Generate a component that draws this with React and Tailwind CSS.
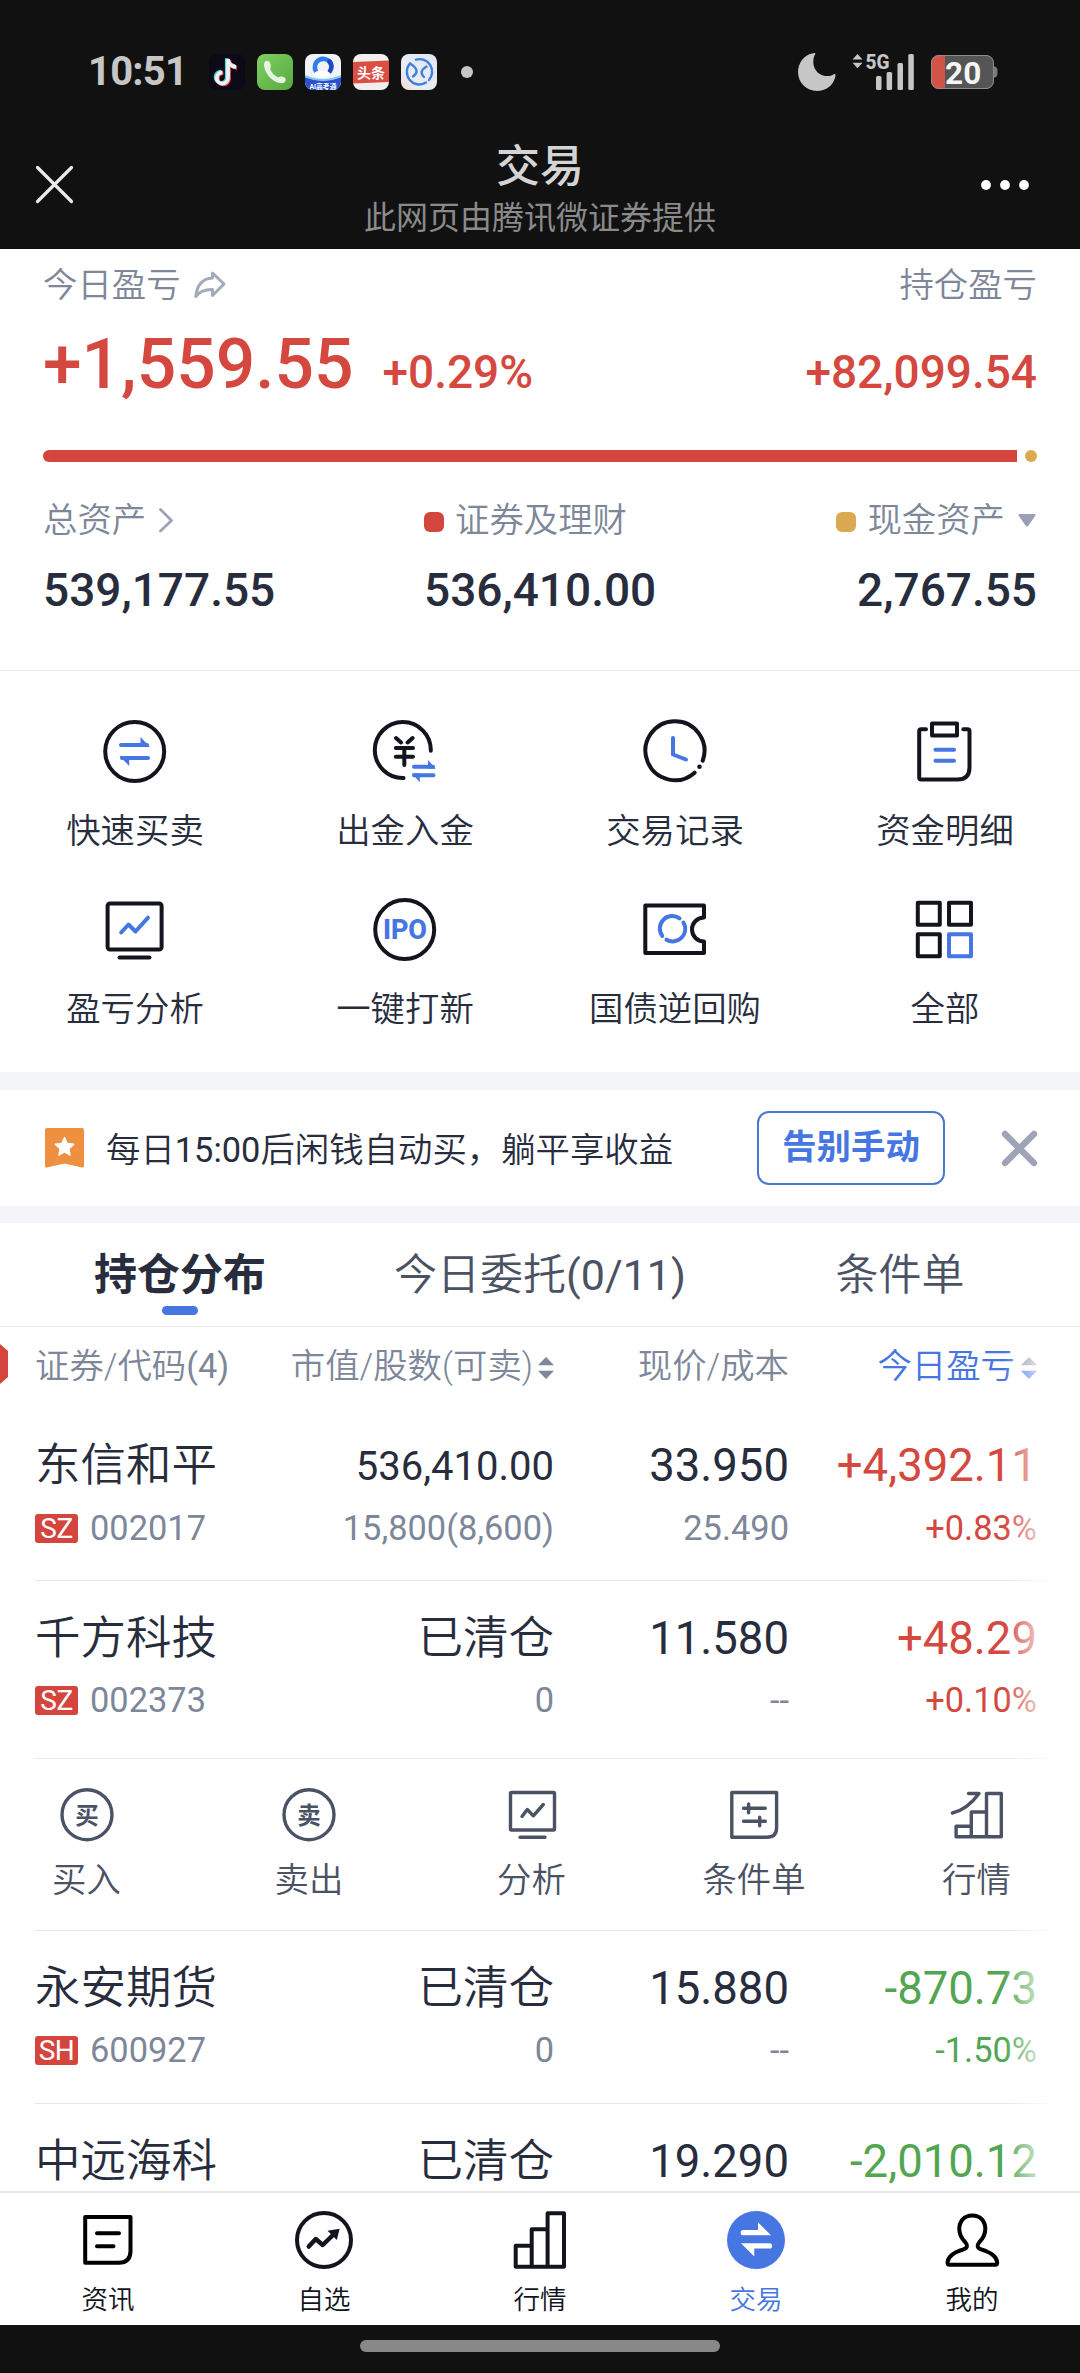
import React from "react";

const INK = "#12151d";
const BLUE = "#4576e2";
const SLATE = "#4a5264";

function Svg({ w, h, children, className = "", stroke = INK, sw = 4 }) {
  return (
    <svg
      width={w}
      height={h}
      viewBox={`0 0 ${w} ${h}`}
      fill="none"
      stroke={stroke}
      strokeWidth={sw}
      strokeLinecap="round"
      strokeLinejoin="round"
      className={`block shrink-0 overflow-visible ${className}`}
    >
      {children}
    </svg>
  );
}

/* ---------- status bar ---------- */

function AppIcons() {
  return (
    <div className="flex gap-3">
      <Svg w={36} h={36} stroke="none">
        <rect width="36" height="36" rx="8" fill="#0b0a16" />
        <g fill="none" strokeWidth="3.8" strokeLinecap="butt">
          <path d="M18.6 4.6V24a5.6 5.6 0 1 1-5.6-6M18.6 5c.6 4.2 3.4 7 8 7.6" stroke="#4fd8da" transform="translate(-.8 -.4)" />
          <path d="M18.6 4.6V24a5.6 5.6 0 1 1-5.6-6M18.6 5c.6 4.2 3.4 7 8 7.6" stroke="#e2455c" transform="translate(1.4 1.2)" />
          <path d="M18.6 4.6V24a5.6 5.6 0 1 1-5.6-6M18.6 5c.6 4.2 3.4 7 8 7.6" stroke="#f0f0f0" transform="translate(.4 .4)" />
        </g>
      </Svg>
      <Svg w={36} h={36} stroke="none">
        <defs>
          <linearGradient id="call" x1="0" y1="0" x2="1" y2="1">
            <stop offset="0" stopColor="#7fd162" />
            <stop offset="1" stopColor="#58a83e" />
          </linearGradient>
        </defs>
        <rect width="36" height="36" rx="8" fill="url(#call)" />
        <path d="M8.5 7.3c1.7-1 4-.2 4.6 1.6.7 2 .9 3.2.5 4.6-.4 1.300-.5 2 .3 3.300 1.500 2.600 3.600 4.500 6 5.900 1.200.7 1.900.5 3 .1 1.400-.5 3.400-.1 4.800.8 1.500 1 1.400 3.900-.4 4.900-2.200 1.200-5.700.8-8.900-1C12.600 24.400 8.700 19.300 7.300 13.300c-.6-2.600-.4-5.100 1.200-6Z" fill="#e6f3e0" />
      </Svg>
      <Svg w={36} h={36} stroke="none">
        <defs>
          <clipPath id="qb"><rect width="36" height="36" rx="8" /></clipPath>
        </defs>
        <g clipPath="url(#qb)">
          <rect width="36" height="36" fill="#f1f3f6" />
          <path d="M0 23q18 7 36 0v13H0Z" fill="#2a51d0" />
          <path d="M0 21q18 8 36 0v2.500q-18 7-36 0Z" fill="#7fc6f2" />
          <path d="M11 17.500a8.300 8.300 0 1 1 14.500-8.500" stroke="#2f7de8" strokeWidth="4.600" />
          <path d="M24.500 7.500a8.300 8.300 0 0 1 .5 9.600" stroke="#2244c8" strokeWidth="4.600" />
          <ellipse cx="17" cy="20" rx="8" ry="3.400" fill="#fff" />
          <text x="18" y="34.500" fontSize="6.800" fontWeight="700" fill="#fff" textAnchor="middle">AI高考通</text>
        </g>
      </Svg>
      <Svg w={36} h={36} stroke="none">
        <rect width="36" height="36" rx="8" fill="#f1f0ef" />
        <path d="M0 8 36 6.500V28L0 29.500Z" fill="#dc4d42" />
        <text x="18" y="23.500" fontSize="14" fontWeight="700" fill="#fff" textAnchor="middle">头条</text>
      </Svg>
      <Svg w={36} h={36} stroke="none">
        <defs>
          <linearGradient id="cc" x1="1" y1="0" x2="0" y2="1">
            <stop offset="0" stopColor="#dfe6f1" />
            <stop offset=".7" stopColor="#eaecf2" />
            <stop offset="1" stopColor="#f3dcc9" />
          </linearGradient>
        </defs>
        <rect width="36" height="36" rx="8" fill="url(#cc)" />
        <g stroke="#4380de" strokeWidth="2.400">
          <path d="M15 5.600A12.600 12.600 0 0 1 28 26M25 28.600A12.600 12.600 0 0 1 9 9.500" />
          <path d="M9 9.500c7 4.500 9 8.500 3 13M25.500 12.500c-6 3.500-6 7-2.500 10.500" />
        </g>
      </Svg>
    </div>
  );
}

function StatusBar() {
  return (
    <div className="flex h-36 items-center pl-[88px] pr-[82px]">
      <span className="w-[121px] text-[40px] font-bold leading-[36px] tracking-[-0.8px] text-[#c6c6c6]">10:51</span>
      <AppIcons />
      <span className="ml-6 h-3 w-3 rounded-full bg-[#c6c6c6]" />
      <div className="ml-auto flex items-center">
        <Svg w={38} h={38} stroke="none">
          <path d="M17.500 0.500C12 10 17 24 31 23c2.500-.2 4-1.200 5.300-2C38 20.500 37.500 23 37 25 34.500 33 27.500 38 19 38 8.500 38 0 29.500 0 19 0 9.500 6.500 2 14 .4c1.500-.3 3.800-1 3.500.1Z" fill="#c6c6c6" />
        </Svg>
        <Svg w={62} h={36} stroke="none" className="ml-[16px]">
          <path d="M5.500 0 10.500 5.500H.5ZM5.500 14.300.500 8.800h10Z" fill="#c6c6c6" />
          <text x="13.500" y="14.600" fontSize="20.500" fontWeight="800" fill="#c6c6c6" textLength="24" lengthAdjust="spacingAndGlyphs">5G</text>
          <g fill="#c6c6c6">
            <rect x="24" y="22" width="5.500" height="14" rx="1.500" />
            <rect x="34.600" y="18" width="5.500" height="18" rx="1.500" />
            <rect x="45.500" y="9" width="5.500" height="27" rx="1.500" />
            <rect x="56.300" y="0" width="5.500" height="36" rx="1.500" />
          </g>
        </Svg>
        <Svg w={67} h={34} stroke="none" className="ml-[17px]">
          <defs>
            <clipPath id="bat"><rect width="63" height="34" rx="8" /></clipPath>
          </defs>
          <path d="M62 11c4 1 4.500 2 4.500 6s-.5 5-4.500 6Z" fill="#7a7a7a" />
          <g clipPath="url(#bat)">
            <rect width="63" height="34" fill="#555" />
            <rect width="14" height="34" fill="#d25446" />
          </g>
          <rect x=".5" y=".5" width="62" height="33" rx="7.500" stroke="#8d8d8d" strokeWidth="1" />
          <text x="32.200" y="28.500" fontSize="31.500" fontWeight="700" fill="#f5f5f5" textAnchor="middle">20</text>
        </Svg>
      </div>
    </div>
  );
}

function TitleBar() {
  return (
    <div className="flex h-[105px] items-start justify-between pl-[36px] pr-[50px]">
      <Svg w={38} h={38} stroke="#ebebeb" sw={3.2} className="mt-[22px]">
        <path d="M1.500 1.500 35.500 35.500M35.500 1.500 1.500 35.500" />
      </Svg>
      <div className="ml-[26px] flex flex-col items-center">
        <h1 className="h-[48px] text-[44px] font-medium leading-[46px] text-[#d4d4d4]">交易</h1>
        <p className="text-[32px] leading-[52px] text-[#8a8a8a]">此网页由腾讯微证券提供</p>
      </div>
      <Svg w={50} h={10} stroke="none" className="mt-[36px]">
        <circle cx="6" cy="5" r="4.900" fill="#fff" />
        <circle cx="25" cy="5" r="4.900" fill="#fff" />
        <circle cx="44" cy="5" r="4.900" fill="#fff" />
      </Svg>
    </div>
  );
}

/* ---------- account summary ---------- */

function Summary() {
  return (
    <section className="h-[422px] border-b border-[#e9eaec] px-[43px] pt-[15px]">
      <div className="flex h-[42px] items-center justify-between text-[34.4px] font-[350] leading-[42px] text-[#7d8799]">
        <span className="flex items-center">
          今日盈亏
          <Svg w={32} h={28} stroke="#a3abba" sw={3} className="ml-[13px]">
            <path d="M18.500 2 30 13 18.500 24.500V18.600C11 18.500 5.500 20.500 1.800 25.500 3 14 8.500 7.500 18.500 7Z" />
          </Svg>
        </span>
        <span>持仓盈亏</span>
      </div>
      <div className="flex h-[91px] items-baseline pt-[18px] font-medium leading-[82px] text-[#d4483f]">
        <span className="text-[69.5px]">+1,559.55</span>
        <span className="ml-[29px] text-[46px]">+0.29%</span>
        <span className="ml-auto text-[46px]">+82,099.54</span>
      </div>
      <div className="mt-[53px] flex h-3 gap-2">
        <span className="flex-1 rounded-l-full bg-[#d4463d]" />
        <span className="w-3 rounded-full bg-[#dba94f]" />
      </div>
      <div className="mt-[37px] flex text-[34.4px] font-[350] leading-[42px] text-[#7d8799]">
        <div className="w-[381px]">
          <div className="flex items-center">
            总资产
            <Svg w={14} h={24} stroke="#9ba4b6" sw={2.8} className="ml-[13px]">
              <path d="M1.500 1.500 12.500 12.500 1.500 23" />
            </Svg>
          </div>
          <p className="mt-[17px] text-[46px] font-medium leading-[64px] text-[#282d3e]">539,177.55</p>
        </div>
        <div className="flex-1">
          <div className="flex items-center">
            <i className="mr-[11px] mt-[3px] h-5 w-5 rounded-[6px] bg-[#d4463d]" />
            证券及理财
          </div>
          <p className="mt-[17px] text-[46px] font-medium leading-[64px] text-[#282d3e]">536,410.00</p>
        </div>
        <div>
          <div className="flex items-center justify-end">
            <i className="mr-[11px] mt-[3px] h-5 w-5 rounded-[6px] bg-[#dba94f]" />
            现金资产
            <Svg w={18} h={13} stroke="none" className="ml-[13px] mr-px">
              <path d="M1.500 0h15c1 0 1.500.8.8 1.800L10.500 11.500c-.8 1.200-2.200 1.200-3 0L.7 1.800C0 .8.500 0 1.500 0Z" fill="#9b9fb5" />
            </Svg>
          </div>
          <p className="mt-[17px] text-right text-[46px] font-medium leading-[64px] text-[#282d3e]">2,767.55</p>
        </div>
      </div>
    </section>
  );
}

/* ---------- shortcuts ---------- */

const shortcuts = [
  {
    label: "快速买卖",
    icon: (
      <>
        <circle cx="31.700" cy="31.500" r="29.500" />
        <g stroke={BLUE}><path d="M18 25H44M19 38H45" /></g>
        <path d="M37.500 17 47 27H37.500ZM16.500 36 26.200 46V36Z" fill={BLUE} stroke="none" />
      </>
    ),
  },
  {
    label: "出金入金",
    icon: (
      <>
        <path d="M30.600 58A28 28 0 1 1 57.800 30.700" />
        <path d="M23 18 28 22.500M39.600 18 34.600 22.500M22.800 28H40M22.800 36.700H40M31.300 28V45" />
        <g stroke={BLUE}><path d="M41 46.700H60M41 55.300H60.500" /></g>
        <path d="M55 40 62.800 48.700H55ZM39 53.500 46.800 62.300V53.500Z" fill={BLUE} stroke="none" />
      </>
    ),
  },
  {
    label: "交易记录",
    icon: (
      <>
        <path d="M51.600 52.700A29.500 29.500 0 1 1 59.700 40.700" />
        <circle cx="56.500" cy="46.700" r="2.300" fill={INK} stroke="none" />
        <path d="M30 18V34.500L43 39.500" stroke={BLUE} />
      </>
    ),
  },
  {
    label: "资金明细",
    icon: (
      <>
        <path d="M13 9.300H8.200Q6.200 9.300 6.200 11.300V57.600Q6.200 59.600 8.200 59.600H44.500Q56.500 59.600 56.500 47.600V11.300Q56.500 9.300 54.500 9.300H50.300" />
        <rect x="19" y="3.500" width="25" height="12" />
        <path d="M22.500 29.700H41M22.500 40.700H41" stroke={BLUE} />
      </>
    ),
  },
  {
    label: "盈亏分析",
    icon: (
      <>
        <rect x="4.600" y="5.500" width="54" height="46" rx="2.500" />
        <path d="M16.500 59.500H46.500" />
        <path d="M18.200 34.500 25.500 26.500 32.500 33.500 45 19.700" stroke={BLUE} />
      </>
    ),
  },
  {
    label: "一键打新",
    icon: (
      <>
        <circle cx="31.700" cy="31.500" r="29.500" />
        <text x="10" y="41" fontSize="27" fontWeight="800" fill={BLUE} stroke="none" textLength="44" lengthAdjust="spacing">IPO</text>
      </>
    ),
  },
  {
    label: "国债逆回购",
    icon: (
      <>
        <path d="M61 7.500H2.300V55H61V43.500A12 12 0 0 1 61 19.500Z" />
        <g stroke={BLUE}><path d="M19.300 38A12.500 12.500 0 0 1 36.500 20.300M40.500 24.500A12.500 12.500 0 0 1 23.500 41.700" /></g>
      </>
    ),
  },
  {
    label: "全部",
    icon: (
      <>
        <path d="M4.800 4.700H26.800V26.700H4.800ZM36 4.700H58V26.700H36ZM4.800 36.300H26.800V58.300H4.800Z" />
        <path d="M36 36.300H58V58.300H36Z" stroke={BLUE} />
      </>
    ),
  },
];

function Shortcuts() {
  return (
    <section className="grid h-[401px] grid-cols-4 content-start pt-[49px]">
      {shortcuts.map((s) => (
        <div key={s.label} className="flex h-[178px] flex-col items-center">
          <Svg w={64} h={64}>{s.icon}</Svg>
          <span className="mt-[26px] text-[34.4px] font-[350] leading-[42px] text-[#282d3e]">{s.label}</span>
        </div>
      ))}
    </section>
  );
}

function Banner() {
  return (
    <section className="flex h-[151px] items-center border-b-[17px] border-t-[18px] border-[#f4f5f9] pl-[45px] pr-[42px]">
      <Svg w={39} h={40} stroke="none">
        <path d="M0 2Q0 0 2 0H37Q39 0 39 2V38Q39 40 37 39.500L19.500 35.500 2 39.500Q0 40 0 38Z" fill="#ee9040" />
        <path d="M19.500 9.300 22.300 15.400 28.800 16.200 24 20.800 25.200 27.200 19.500 24 13.800 27.200 15 20.800 10.200 16.200 16.700 15.400Z" fill="#fff" stroke="#fff" strokeWidth="1.200" />
      </Svg>
      <p className="ml-[22px] mt-[3px] text-[34.4px] font-[350] leading-[42px] text-[#282d3e]">每日<span className="font-normal">15:00</span>后闲钱自动买，躺平享收益</p>
      <button className="ml-auto h-[74px] w-[188px] rounded-xl border-2 border-[#4a78cf] pb-[3px] text-[34.4px] font-bold leading-[42px] text-[#4576e2]">告别手动</button>
      <Svg w={37} h={37} stroke="#9ea4b5" sw={6.4} className="ml-[56px]">
        <path d="M4 4 33 33M33 4 4 33" />
      </Svg>
    </section>
  );
}

/* ---------- holdings ---------- */

function Tabs() {
  return (
    <div className="grid h-[104px] grid-cols-3 border-b border-[#e6e7e9] text-center text-[43px] font-[350] leading-[104px] text-[#4a5264]">
      <div className="relative font-bold text-[#282d3e]">
        持仓分布
        <i className="absolute bottom-[12px] left-1/2 h-[9px] w-9 -translate-x-1/2 rounded-full bg-[#4576e2]" />
      </div>
      <div>今日委托<span className="font-normal">(0/11)</span></div>
      <div>条件单</div>
    </div>
  );
}

function Sort({ up, down, className = "" }) {
  return (
    <Svg w={16} h={22} stroke="none" className={className}>
      <path d="M8 0 16 8.300H0Z" fill={up} />
      <path d="M8 22 0 13.700H16Z" fill={down} />
    </Svg>
  );
}

const cols = "grid grid-cols-[250px_269px_235px_248px] pl-[35px]";

function TableHead() {
  return (
    <div className={`${cols} h-[81px] text-[34.4px] font-[350] leading-[79px] text-[#7d8799]`}>
      <div className="relative">
        证券/代码<span className="font-normal">(4)</span>
        <Svg w={8} h={40} stroke="none" className="absolute -left-[35px] top-[17px]">
          <path d="M0 0 8 7V33L0 40Z" fill="#d4463d" />
        </Svg>
      </div>
      <div className="flex h-[79px] items-center justify-end">
        市值/股数(可卖)
        <Sort up="#7d8799" down="#7d8799" className="ml-[5px] mt-[2px]" />
      </div>
      <div className="text-right">现价/成本</div>
      <div className="flex h-[79px] items-center justify-end text-[#4576e2]">
        今日盈亏
        <Sort up="#8f94a3" down="#4576e2" className="ml-[6px] mt-[2px]" />
      </div>
    </div>
  );
}

const rows = [
  { name: "东信和平", market: "SZ", code: "002017", value: "536,410.00", shares: "15,800(8,600)", price: "33.950", cost: "25.490", pnl: "+4,392.11", pct: "+0.83%", up: true },
  { name: "千方科技", market: "SZ", code: "002373", value: "已清仓", shares: "0", price: "11.580", cost: "--", pnl: "+48.29", pct: "+0.10%", up: true },
  { name: "永安期货", market: "SH", code: "600927", value: "已清仓", shares: "0", price: "15.880", cost: "--", pnl: "-870.73", pct: "-1.50%" },
  { name: "中远海科", value: "已清仓", price: "19.290", pnl: "-2,010.12" },
];

function Row({ r, className = "h-[173px]" }) {
  return (
    <div className={`${className} ${cols} relative content-start pt-[28px] text-[45.500px] leading-[60px] text-[#282d3e]`}>
      <div className="font-[350]">{r.name}</div>
      <div className={r.value.length > 5 ? "pt-px text-right text-[40px]" : "text-right font-[350]"}>{r.value}</div>
      <div className="text-right">{r.price}</div>
      <div className={`text-right ${r.up ? "text-[#d4483f]" : "text-[#52a652]"}`}>{r.pnl}</div>
      {r.code && (
        <>
          <div className="flex h-[61px] items-center pt-px text-[34.4px] text-[#7d8799]">
            <span className="mr-3 h-[29px] w-[43px] rounded-[3px] bg-[#d4463d] text-center text-[28px] leading-[29px] tracking-[-0.5px] text-white">{r.market}</span>
            <span>{r.code}</span>
          </div>
          <div className="pt-px text-right text-[34.4px] text-[#7d8799]">{r.shares}</div>
          <div className="pt-px text-right text-[34.4px] text-[#7d8799]">{r.cost}</div>
          <div className={`pt-px text-right text-[34.4px] ${r.up ? "text-[#d4483f]" : "text-[#52a652]"}`}>{r.pct}</div>
        </>
      )}
      <i className="absolute bottom-0 left-[35px] right-0 h-px bg-[#e6e7e9]" />
    </div>
  );
}

const actions = [
  {
    label: "买入",
    icon: (
      <>
        <circle cx="27" cy="26.700" r="25" />
        <text x="27" y="35.500" fontSize="23.500" fontWeight="700" fill={SLATE} stroke="none" textAnchor="middle">买</text>
      </>
    ),
  },
  {
    label: "卖出",
    icon: (
      <>
        <circle cx="27" cy="26.700" r="25" />
        <text x="27" y="35.500" fontSize="23.500" fontWeight="700" fill={SLATE} stroke="none" textAnchor="middle">卖</text>
      </>
    ),
  },
  {
    label: "分析",
    icon: (
      <>
        <rect x="5.500" y="4.500" width="44" height="37.500" rx="1" />
        <path d="M15 49.300H40M17 28.500 22.300 21.500 28.300 27.800 38.300 16.500" />
      </>
    ),
  },
  {
    label: "条件单",
    icon: (
      <>
        <path d="M4.800 4.500H49.600V39.500Q49.600 49.300 39.800 49.300H4.800Z" />
        <path d="M16.500 20.300H38.300M21.600 16V24.800M16.500 33.300H38.300M32.700 29.300V37.800" />
      </>
    ),
  },
  {
    label: "行情",
    icon: (
      <>
        <path d="M36.500 5.500H51.300V48.700H6.100V38.300H21.300V24H36.500ZM36.500 24V48M21.300 38V48" />
        <path d="M2.400 25C13 22.500 21 16.500 29 5.500M18.500 5.500H29" />
      </>
    ),
  },
];

function Actions() {
  return (
    <div className="relative flex h-[172px] items-start justify-between pl-[35px] pr-[52px] pt-[29px]">
      {actions.map((a) => (
        <div key={a.label} className="flex w-[103px] flex-col items-center">
          <Svg w={54} h={54} stroke={SLATE} sw={3.4}>{a.icon}</Svg>
          <span className="mt-[17px] whitespace-nowrap text-[34.4px] font-[350] leading-[42px] text-[#4a5264]">{a.label}</span>
        </div>
      ))}
      <i className="absolute bottom-0 left-[35px] right-0 h-px bg-[#e6e7e9]" />
    </div>
  );
}

/* ---------- bottom navigation ---------- */

const nav = [
  {
    label: "资讯",
    icon: (
      <g stroke="#000">
        <path d="M6.200 6H51.500V40Q51.500 51.800 39.700 51.800H6.200Z" />
        <path d="M18 22.300H40M18 35.300H34.500" />
      </g>
    ),
  },
  {
    label: "自选",
    icon: (
      <>
        <circle cx="29" cy="29" r="27" />
        <path d="M13.800 35.500 20.700 28 27.700 34 38 24" strokeWidth="4.500" />
        <path d="M44.600 17.700 32.500 19.700 41.800 29Z" fill={INK} stroke="none" />
      </>
    ),
  },
  {
    label: "行情",
    icon: <path d="M36.600 2.300H53V55.700H4.700V34.700H20.700V18.300H36.600ZM36.600 18V55M20.700 34.700V55" />,
  },
  {
    label: "交易",
    active: true,
    icon: (
      <>
        <circle cx="29" cy="29" r="29" fill={BLUE} stroke="none" />
        <path d="M16.300 19H31V11.300L44 24.300H16.300A2.600 2.600 0 0 1 16.300 19ZM42.500 37.600H27.300V45.500L14 32.300H42.500A2.600 2.600 0 0 1 42.500 37.600Z" fill="#fff" stroke="none" />
      </>
    ),
  },
  {
    label: "我的",
    icon: (
      <path
        stroke="#000"
        d="M29.300 4.500C21 4.500 16.300 10.500 16.300 18 16.300 24 19 28 22.500 31.500 25 34.500 24.500 37 20.500 38.300 10 41.500 4.800 46 4.500 51.500 4.500 53 5.200 53.700 6.500 53.700H52.200C53.500 53.700 54.200 53 54.200 51.500 53.900 46 48.600 41.500 38.100 38.300 34.100 37 33.600 34.500 36.100 31.500 39.600 28 42.300 24 42.300 18 42.300 10.500 37.600 4.500 29.300 4.500Z"
      />
    ),
  },
];

function BottomNav() {
  return (
    <nav className="grid h-[134px] grid-cols-5 border-t-2 border-[#e5e6e9] bg-white pt-[18px]">
      {nav.map((n) => (
        <div key={n.label} className="flex flex-col items-center">
          <Svg w={58} h={58}>{n.icon}</Svg>
          <span className={`mt-[15px] text-[26.500px] font-[350] leading-[32px] ${n.active ? "text-[#4576e2]" : "text-[#12151d]"}`}>{n.label}</span>
        </div>
      ))}
    </nav>
  );
}

export default function App() {
  return (
    <main className="h-[2373px] w-[1080px] overflow-hidden bg-white font-[Roboto,'Noto_Sans_CJK_SC',sans-serif]">
      <header className="h-[249px] bg-[#111]">
        <StatusBar />
        <TitleBar />
      </header>
      <Summary />
      <Shortcuts />
      <Banner />
      <Tabs />
      <section className="relative h-[864px] overflow-hidden">
        <TableHead />
        <Row r={rows[0]} />
        <Row r={rows[1]} className="h-[178px]" />
        <Actions />
        <Row r={rows[2]} />
        <Row r={rows[3]} className="h-[88px]" />
        <div className="absolute inset-y-0 right-0 w-[76px] bg-linear-to-r from-white/0 to-white to-65%" />
      </section>
      <BottomNav />
      <footer className="flex h-12 justify-center bg-[#111] pt-[15px]">
        <i className="h-3 w-[360px] rounded-full bg-[#888]" />
      </footer>
    </main>
  );
}
